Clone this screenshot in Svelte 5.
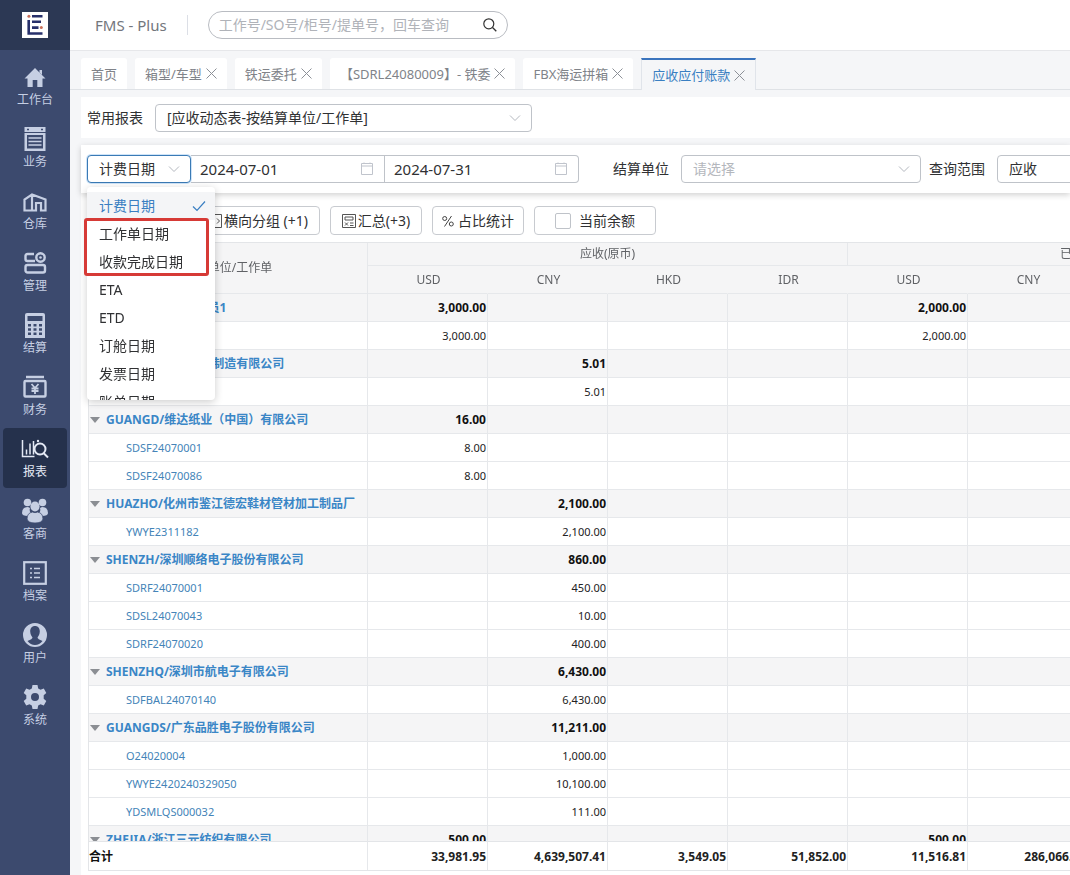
<script lang="ts">
  type Row = { name: string; group?: boolean; values: Record<number, string> };

  const menus = ['工作台', '业务', '仓库', '管理', '结算', '财务', '报表', '客商', '档案', '用户', '系统'];
  let activeMenu = $state('报表');

  const tabs = ['首页', '箱型/车型', '铁运委托', '【SDRL24080009】- 铁委', 'FBX海运拼箱', '应收应付账款'];
  let activeTab = $state('应收应付账款');

  const dateTypes = ['计费日期', '工作单日期', '收款完成日期', 'ETA', 'ETD', '订舱日期', '发票日期', '账单日期'];
  let dateType = $state('计费日期');
  let menuOpen = $state(true);
  let dateFrom = $state('2024-07-01');
  let dateTo = $state('2024-07-31');

  const currencies = ['USD', 'CNY', 'HKD', 'IDR'];

  // values 的 key 为币种列序号,0-3 应收,4-7 已收
  const rows: Row[] = [
    { name: 'SHENZH/深圳业务员1', group: true, values: { 0: '3,000.00', 4: '2,000.00' } },
    { name: 'SDSF24070002', values: { 0: '3,000.00', 4: '2,000.00' } },
    { name: 'GUANGD/顺德家具制造有限公司', group: true, values: { 1: '5.01' } },
    { name: 'SDSF24070003', values: { 1: '5.01' } },
    { name: 'GUANGD/维达纸业（中国）有限公司', group: true, values: { 0: '16.00' } },
    { name: 'SDSF24070001', values: { 0: '8.00' } },
    { name: 'SDSF24070086', values: { 0: '8.00' } },
    { name: 'HUAZHO/化州市鉴江德宏鞋材管材加工制品厂', group: true, values: { 1: '2,100.00' } },
    { name: 'YWYE2311182', values: { 1: '2,100.00' } },
    { name: 'SHENZH/深圳顺络电子股份有限公司', group: true, values: { 1: '860.00' } },
    { name: 'SDRF24070001', values: { 1: '450.00' } },
    { name: 'SDSL24070043', values: { 1: '10.00' } },
    { name: 'SDRF24070020', values: { 1: '400.00' } },
    { name: 'SHENZHQ/深圳市航电子有限公司', group: true, values: { 1: '6,430.00' } },
    { name: 'SDFBAL24070140', values: { 1: '6,430.00' } },
    { name: 'GUANGDS/广东品胜电子股份有限公司', group: true, values: { 1: '11,211.00' } },
    { name: 'O24020004', values: { 1: '1,000.00' } },
    { name: 'YWYE2420240329050', values: { 1: '10,100.00' } },
    { name: 'YDSMLQS000032', values: { 1: '111.00' } },
    { name: 'ZHEJIA/浙江三元纺织有限公司', group: true, values: { 0: '500.00', 4: '500.00' } }
  ];
  const totals = ['33,981.95', '4,639,507.41', '3,549.05', '51,852.00', '11,516.81', '286,066.52', '', ''];

  function openMenu(e: Event) {
    e.preventDefault(); // 不弹原生下拉,用下面的列表
    menuOpen = !menuOpen;
  }

  function pick(type: string) {
    dateType = type;
    menuOpen = false;
  }
</script>

{#snippet chevron()}
  <svg class="chevron" viewBox="0 0 12 12"><path d="M1 3.5l5 5 5-5" fill="none" stroke="#b4b8bf" /></svg>
{/snippet}

{#snippet calendar()}
  <svg class="calendar" viewBox="0 0 14 14"><path d="M1.5 1.5h11v11h-11zM1.5 4h11M4 .5v1M10 .5v1" fill="none" stroke="#c0c4cc" /></svg>
{/snippet}

{#snippet menuIcon(name: string)}
  <svg class="menu-icon" viewBox="0 0 24 24" fill="currentColor">
    {#if name === '工作台'}
      <path d="M12 3L1.5 13.5h3V22h5.200v-7h4.600v7h5.200v-8.500h3z" />
      <path d="M16.500 5h2.500v5l-2.500-2.500z" />
    {:else if name === '业务'}
      <path d="M1.500 0h21v5h-21zM1.500 6h21v18h-21zM4 8v13.500h16V8z" fill-rule="evenodd" />
      <path d="M5.500 11h13M5.500 14.500h13M5.500 18h13" stroke="currentColor" stroke-width="1.500" />
      <path d="M4 2.500h2M18 2.500h2" stroke="#3c4a6e" stroke-width="1.500" />
    {:else if name === '仓库'}
      <path d="M9 21.500H1.500V10.500L9 5.500l13.500 5v11H18V14h-5v7.500H9zM9 5.500v16" fill="none" stroke="currentColor" stroke-width="2.200" />
    {:else if name === '管理'}
      <path d="M11 3H4.500Q2.500 3 2.500 5v3Q2.500 10 4.500 10H12" fill="none" stroke="currentColor" stroke-width="2.400" />
      <circle cx="17.500" cy="6.500" r="4.200" fill="none" stroke="currentColor" stroke-width="2.400" />
      <circle cx="17.500" cy="6.500" r="1.300" />
      <rect x="2.500" y="14" width="19.500" height="7.500" rx="2" fill="none" stroke="currentColor" stroke-width="2.400" />
    {:else if name === '结算'}
      <path d="M4 0h16q2 0 2 2v23H2V2q0-2 2-2zM4.500 3v5h15V3zM5 11v2.500h3V11zm5.500 0v2.500h3V11zM16 11v2.500h3V11zM5 15.300v2.500h3v-2.500zm5.500 0v2.500h3v-2.500zm5.500 0v2.500h3v-2.500zM5 19.500V22h3v-2.500zm5.500 0V22h3v-2.500zm5.500 0V22h3v-2.500z" fill-rule="evenodd" />
    {:else if name === '财务'}
      <path d="M3 2h18" stroke="currentColor" stroke-width="2.500" />
      <rect x="1.500" y="6" width="21" height="15.500" rx="1" fill="none" stroke="currentColor" stroke-width="2.400" />
      <path d="M8.500 9l3.500 4 3.500-4M12 13v6M8.500 13.500h7M8.500 16h7" fill="none" stroke="currentColor" stroke-width="1.800" />
    {:else if name === '报表'}
      <path d="M-.5 3v16.500h12M3.500 17.500v-5M7 17.500V6.500M10.500 17.500V4" fill="none" stroke="currentColor" stroke-width="1.500" />
      <circle cx="17" cy="12" r="5.500" fill="none" stroke="currentColor" stroke-width="2" />
      <circle cx="15" cy="4" r="1.200" />
      <path d="M20.500 16l4.500 4.500" stroke="currentColor" stroke-width="2" />
    {:else if name === '客商'}
      <circle cx="4.500" cy="3.500" r="3.800" />
      <circle cx="19.500" cy="3.500" r="3.800" />
      <path d="M-1 14q0-6 6-6l2 1q-1 3 1 5l-3 3q-6 0-6-3zM25 14q0-6-6-6l-2 1q1 3-1 5l3 3q6 0 6-3z" />
      <ellipse cx="12" cy="7.500" rx="4.600" ry="5" />
      <path d="M4 20q0-6 5.500-7 2.500 1.300 5 0Q20 14 20 20q-1 4-8 4t-8-4z" stroke="#3c4a6e" stroke-width=".8" />
    {:else if name === '档案'}
      <rect x="1.200" y="1.200" width="21.600" height="21.600" fill="none" stroke="currentColor" stroke-width="2.200" />
      <path d="M7 7.500h2M7 12h2M7 16.500h2M11 7.500h6M11 12h6M11 16.500h6" stroke="currentColor" stroke-width="1.700" />
    {:else if name === '用户'}
      <path d="M12 0a12 12 0 1 0 0 24 12 12 0 0 0 0-24zM12 3c3 0 4.800 2.200 4.800 5.300 0 3-1.300 4.800-2.300 6.200q0 1.500 5 3.500-3 4-7.500 4t-7.500-4q5-2 5-3.500C8.500 13 7.200 11.200 7.200 8.300 7.200 5.200 9 3 12 3z" fill-rule="evenodd" />
    {:else}
      <path d="M9.500 0h5l.7 3.400 2.300 1.300 3.300-1.100 2.500 4.300-2.600 2.300v3.600l2.600 2.300-2.500 4.300-3.300-1.100-2.300 1.300-.7 3.400h-5l-.7-3.400-2.300-1.300-3.300 1.100L.7 16.100l2.600-2.300v-3.600L.7 7.900l2.500-4.300 3.300 1.100 2.300-1.300zM12 8a4 4 0 1 0 0 8 4 4 0 0 0 0-8z" fill-rule="evenodd" />
    {/if}
  </svg>
{/snippet}

<div class="app">
  <aside class="sidebar">
    <div class="logo">
      <svg viewBox="0 0 26 26">
        <rect width="26" height="26" fill="#fff" />
        <path d="M10 4.200h10.500M10 9.800h9M10 15.600h6.500M6.700 8v13.500h13.800" fill="none" stroke="#27306b" stroke-width="2.600" />
        <circle cx="6.900" cy="4.200" r="1.500" fill="#c9705a" />
        <circle cx="19.300" cy="15.600" r="1.500" fill="#c9705a" />
      </svg>
    </div>
    <nav class="menu">
      {#each menus as menu}
        <button type="button" class="menu-item" class:active={menu === activeMenu} onclick={() => (activeMenu = menu)}>
          {@render menuIcon(menu)}
          <span>{menu}</span>
        </button>
      {/each}
    </nav>
  </aside>

  <main class="main">
    <header class="header">
      <span class="product">FMS - Plus</span>
      <div class="search">
        <input type="text" aria-label="查询" placeholder="工作号/SO号/柜号/提单号，回车查询" />
        <button type="button" class="plain" aria-label="搜索">
          <svg viewBox="0 0 14 14" width="14" height="14"><path d="M9.500 9.500L13.300 13.300" stroke="#333" stroke-width="1.300" /><circle cx="5.800" cy="5.800" r="5" fill="none" stroke="#333" stroke-width="1.200" /></svg>
        </button>
      </div>
    </header>

    <div class="tabs">
      {#each tabs as tab, i}
        <div class="tab" class:active={tab === activeTab}>
          <button type="button" class="plain" onclick={() => (activeTab = tab)}>{tab}</button>
          {#if i > 0}
            <button type="button" class="plain" aria-label="关闭">
              <svg viewBox="0 0 11 11" width="11" height="11"><path d="M.5.500l10 10M10.500.500l-10 10" stroke="#8c9097" /></svg>
            </button>
          {/if}
        </div>
      {/each}
    </div>

    <section class="report-bar">
      <label for="report">常用报表</label>
      <div class="select report-select">
        <select id="report">
          <option>[应收动态表-按结算单位/工作单]</option>
        </select>
        {@render chevron()}
      </div>
    </section>

    <section class="query-bar">
      <div class="date-group">
        <div class="select date-type" class:focus={menuOpen}>
          <select aria-label="日期类型" value={dateType} onmousedown={openMenu}>
            {#each dateTypes as type}
              <option value={type}>{type}</option>
            {/each}
          </select>
          {@render chevron()}
          {#if menuOpen}
            <div class="dropdown">
              <ul class="options">
                {#each dateTypes as type}
                  <li>
                    <button type="button" class="option" class:selected={type === dateType} onclick={() => pick(type)}>
                      {type}
                      {#if type === dateType}
                        <svg viewBox="0 0 14 12" width="14" height="12"><path d="M1 6.500l4 4L13 1.500" fill="none" stroke="#3a7fc2" stroke-width="1.200" /></svg>
                      {/if}
                    </button>
                  </li>
                {/each}
              </ul>
              <div class="marker"></div>
            </div>
          {/if}
        </div>
        <div class="date">
          <input type="text" aria-label="开始日期" bind:value={dateFrom} />
          {@render calendar()}
        </div>
        <div class="date last">
          <input type="text" aria-label="结束日期" bind:value={dateTo} />
          {@render calendar()}
        </div>
      </div>
      <label for="unit">结算单位</label>
      <div class="select unit-select">
        <select id="unit" class="empty">
          <option>请选择</option>
        </select>
        {@render chevron()}
      </div>
      <label for="scope">查询范围</label>
      <div class="select scope-select">
        <select id="scope">
          <option>应收</option>
        </select>
      </div>
    </section>

    <section class="content">
      <div class="toolbar">
        <button type="button" class="tool">纵向分组</button>
        <button type="button" class="tool wide">
          <svg viewBox="0 0 14 14" width="14" height="14"><path d="M.500.500h13v13H.500zM9 4.500L11.500 7 9 9.500M4 4v6" fill="none" stroke="#555" /></svg>横向分组 (+1)
        </button>
        <button type="button" class="tool">
          <svg viewBox="0 0 14 14" width="14" height="14"><path d="M.500.500h13v13H.500zM3 3h8v3H3zM3 8.500l3 3M6 8.500l-3 3M8 9h3.500M8 11.500h3.500" fill="none" stroke="#555" /></svg>汇总(+3)
        </button>
        <button type="button" class="tool spaced">
          <svg viewBox="0 0 12 12" width="12" height="12"><g fill="none" stroke="#444"><circle cx="2.700" cy="3.500" r="2" /><circle cx="9.300" cy="9" r="2" /><path d="M9.500 1l-7 10.500" /></g></svg>占比统计
        </button>
        <label class="tool check"><input type="checkbox" />当前余额</label>
      </div>

      <div class="table-wrap">
        <table>
          <colgroup>
            <col class="name-col" />
            {#each totals as _}<col class="num-col" />{/each}
          </colgroup>
          <thead>
            <tr class="head-top">
              <th rowspan="2">结算单位/工作单</th>
              <th colspan="4">应收(原币)</th>
              <th colspan="4">已收(原币)</th>
            </tr>
            <tr class="head-sub">
              {#each [...currencies, ...currencies] as currency}
                <th>{currency}</th>
              {/each}
            </tr>
          </thead>
          <tbody>
            {#each rows as row}
              <tr class:group={row.group}>
                <td class="name">
                  {#if row.group}<i class="arrow"></i>{/if}<a href="#detail">{row.name}</a>
                </td>
                {#each totals as _, i}
                  <td class="num">{row.values[i] ?? ''}</td>
                {/each}
              </tr>
            {/each}
          </tbody>
          <tfoot>
            <tr>
              <td>合计</td>
              {#each totals as total}
                <td class="num">{total}</td>
              {/each}
            </tr>
          </tfoot>
        </table>
      </div>
    </section>
  </main>
</div>

<style>
  :global(body) {
    margin: 0;
  }

  .app {
    display: flex;
    height: 100vh;
    overflow: hidden;
    background: #f5f6f8;
    color: #303133;
    font-family: 'Noto Sans', 'Noto Sans CJK SC', sans-serif;
    font-size: 14px;
    line-height: 20px;
  }

  .app * {
    box-sizing: border-box;
  }

  button,
  input,
  select {
    font: inherit;
    color: inherit;
  }

  .plain {
    display: flex;
    padding: 0;
    border: 0;
    background: none;
    white-space: nowrap;
    cursor: pointer;
  }

  .sidebar {
    flex: 0 0 70px;
    background: #3c4a6e;
  }

  .logo {
    display: flex;
    align-items: center;
    justify-content: center;
    height: 50px;
    background: #2c3854;
  }

  .logo svg {
    width: 26px;
    height: 26px;
  }

  .menu {
    display: flex;
    flex-direction: column;
    gap: 2px;
    padding: 6px 3px;
  }

  .menu-item {
    display: flex;
    flex-direction: column;
    align-items: center;
    gap: 1px;
    height: 60px;
    padding: 9px 0 0;
    border: 0;
    border-radius: 4px;
    background: none;
    color: #c6cfe3;
    font-size: 12px;
    cursor: pointer;
  }

  .menu-item.active {
    background: #25314c;
    color: #e4e9f5;
  }

  .menu-icon {
    width: 24px;
    height: 24px;
    overflow: visible;
  }

  .main {
    flex: 1;
    min-width: 0;
    display: flex;
    flex-direction: column;
    overflow: hidden;
  }

  .header {
    display: flex;
    align-items: center;
    height: 51px;
    flex-shrink: 0;
    padding-left: 25px;
    background: #fff;
    border-bottom: 1px solid #e6e7ea;
  }

  .product {
    padding-right: 20px;
    margin-right: 20px;
    border-right: 1px solid #dcdfe6;
    color: #73767c;
    font-size: 15px;
  }

  .search {
    display: flex;
    align-items: center;
    width: 300px;
    height: 28px;
    padding: 0 10px;
    border: 1px solid #b9bcc2;
    border-radius: 14px;
  }

  .search input {
    flex: 1;
    min-width: 0;
    padding: 0;
    border: 0;
    outline: 0;
    background: none;
  }

  .search input::placeholder {
    color: #b0b3b9;
  }

  .tabs {
    display: flex;
    align-items: flex-end;
    gap: 8px;
    height: 39px;
    flex-shrink: 0;
    padding-left: 11px;
    border-bottom: 1px solid #dfe2e6;
    font-size: 13px;
    color: #808389;
  }

  .tab {
    display: flex;
    align-items: center;
    gap: 4px;
    height: 31px;
    padding: 0 10px;
    background: #fff;
    border-radius: 3px 3px 0 0;
  }

  .tab.active {
    height: 32px;
    margin-bottom: -1px;
    background: #f5f6f8;
    border: solid #e0e4ea;
    border-width: 2px 1px 0;
    border-top-color: #3a74bd;
    border-radius: 0;
    color: #3a7fc2;
  }

  .report-bar,
  .query-bar {
    display: flex;
    align-items: center;
    flex-shrink: 0;
    margin-left: 11px;
    padding-left: 6px;
    background: #fff;
    white-space: nowrap;
  }

  .report-bar {
    height: 41px;
    margin-top: 7px;
    gap: 12px;
  }

  .query-bar {
    position: relative;
    z-index: 2;
    height: 48px;
    margin-top: 7px;
    box-shadow: 0 2px 6px rgba(0, 0, 0, 0.18);
  }

  .select {
    position: relative;
    display: flex;
    align-items: center;
    height: 28px;
    flex-shrink: 0;
    border: 1px solid #bfc3c9;
    border-radius: 4px;
    background: #fff;
  }

  .select select {
    width: 100%;
    height: 100%;
    padding: 0 24px 0 11px;
    border: 0;
    outline: 0;
    background: none;
    appearance: none;
  }

  .select select.empty {
    color: #b4b7bd;
  }

  .chevron {
    position: absolute;
    right: 10px;
    width: 12px;
    height: 12px;
    pointer-events: none;
  }

  .report-select {
    width: 377px;
  }

  .date-type {
    width: 104px;
  }

  .date-type.focus {
    border-color: #3a7ab5;
    box-shadow: 0 0 0 1px #cfe4f8;
  }

  .unit-select {
    width: 240px;
    margin: 0 8px 0 12px;
  }

  .scope-select {
    width: 120px;
    margin-left: 12px;
  }

  .date-group {
    display: flex;
    margin-right: 34px;
  }

  .date {
    display: flex;
    align-items: center;
    width: 194px;
    height: 28px;
    padding: 0 10px 0 9px;
    border: solid #bfc3c9;
    border-width: 1px 1px 1px 0;
  }

  .date.last {
    border-radius: 0 4px 4px 0;
  }

  .date input {
    flex: 1;
    min-width: 0;
    padding: 0;
    border: 0;
    outline: 0;
    font-size: 15px;
  }

  .calendar {
    width: 14px;
    height: 14px;
  }

  .dropdown {
    position: absolute;
    top: 31px;
    left: -1px;
    width: 128px;
    z-index: 2;
  }

  .options {
    height: 213px;
    margin: 0;
    padding: 5px 0 0;
    overflow: hidden;
    list-style: none;
    background: #fff;
    border-radius: 4px;
    box-shadow: 0 2px 8px rgba(0, 0, 0, 0.2);
  }

  .option {
    display: flex;
    align-items: center;
    justify-content: space-between;
    width: 100%;
    height: 28px;
    padding: 0 9px 0 12px;
    border: 0;
    background: none;
    text-align: left;
    cursor: pointer;
  }

  .option.selected {
    background: #f4f5f7;
    color: #3a7fc2;
  }

  .marker {
    position: absolute;
    top: 31px;
    left: -3px;
    width: 125px;
    height: 58px;
    border: 3px solid #d63a36;
    border-radius: 3px;
    pointer-events: none;
  }

  .content {
    flex: 1;
    min-height: 0;
    display: flex;
    flex-direction: column;
    margin-left: 11px;
    padding: 13px 0 4px 7px;
    background: #fff;
  }

  .toolbar {
    display: flex;
    gap: 10px;
    flex-shrink: 0;
    margin-bottom: 7px;
  }

  .tool {
    display: flex;
    align-items: center;
    justify-content: center;
    gap: 2px;
    min-width: 92px;
    height: 29px;
    padding: 0 8px;
    border: 1px solid #c8cbd0;
    border-radius: 4px;
    background: #fff;
    white-space: nowrap;
    cursor: pointer;
  }

  .tool:first-child {
    min-width: 98px;
  }

  .tool.wide {
    min-width: 124px;
  }

  .tool.spaced {
    gap: 4px;
  }

  .check {
    gap: 8px;
    min-width: 122px;
  }

  .check input {
    width: 16px;
    height: 16px;
    margin: 0;
    border: 1px solid #bfc3c9;
    border-radius: 2px;
    appearance: none;
  }

  .check input:checked {
    background: #3a7fc2;
  }

  .table-wrap {
    flex: 1;
    min-height: 0;
    overflow: auto;
    scrollbar-width: none;
    border: solid #e3e5e8;
    border-width: 1px 0 1px 1px;
  }

  table {
    width: 1239px;
    table-layout: fixed;
    border-collapse: separate;
    border-spacing: 0;
    font-size: 12px;
  }

  .name-col {
    width: 279px;
  }

  .num-col {
    width: 120px;
  }

  th,
  td {
    height: 28px;
    padding: 0;
    border-right: 1px solid #e6e8eb;
    border-bottom: 1px solid #e6e8eb;
    white-space: nowrap;
  }

  thead {
    position: sticky;
    top: 0;
  }

  th {
    background: #f5f5f6;
    color: #606266;
    font-weight: 400;
  }

  .head-top th {
    height: 23px;
  }

  .head-sub th {
    padding-left: 2px;
    border-right-color: #f5f5f6;
  }

  .name {
    padding-left: 37px;
  }

  a {
    color: #4484b8;
    text-decoration: none;
  }

  tbody td {
    font-size: 11px;
  }

  .num {
    padding-right: 1px;
    text-align: right;
    color: #222;
  }

  .group td {
    background: #f5f5f6;
    font-size: 12px;
    font-weight: 700;
  }

  .group .num {
    color: #111;
  }

  .group .name {
    padding-left: 1px;
  }

  .group a {
    color: #3a86c6;
  }

  .arrow {
    display: inline-block;
    margin: 0 6px 1px 0;
    border: solid transparent;
    border-width: 6px 5px 0;
    border-top-color: #8b8e93;
  }

  tfoot {
    position: sticky;
    bottom: 0;
  }

  tfoot td {
    height: 29px;
    padding-top: 2px;
    border-top: 1px solid #e3e5e8;
    border-bottom: 0;
    background: #fff;
    color: #111;
    font-weight: 700;
  }
</style>
